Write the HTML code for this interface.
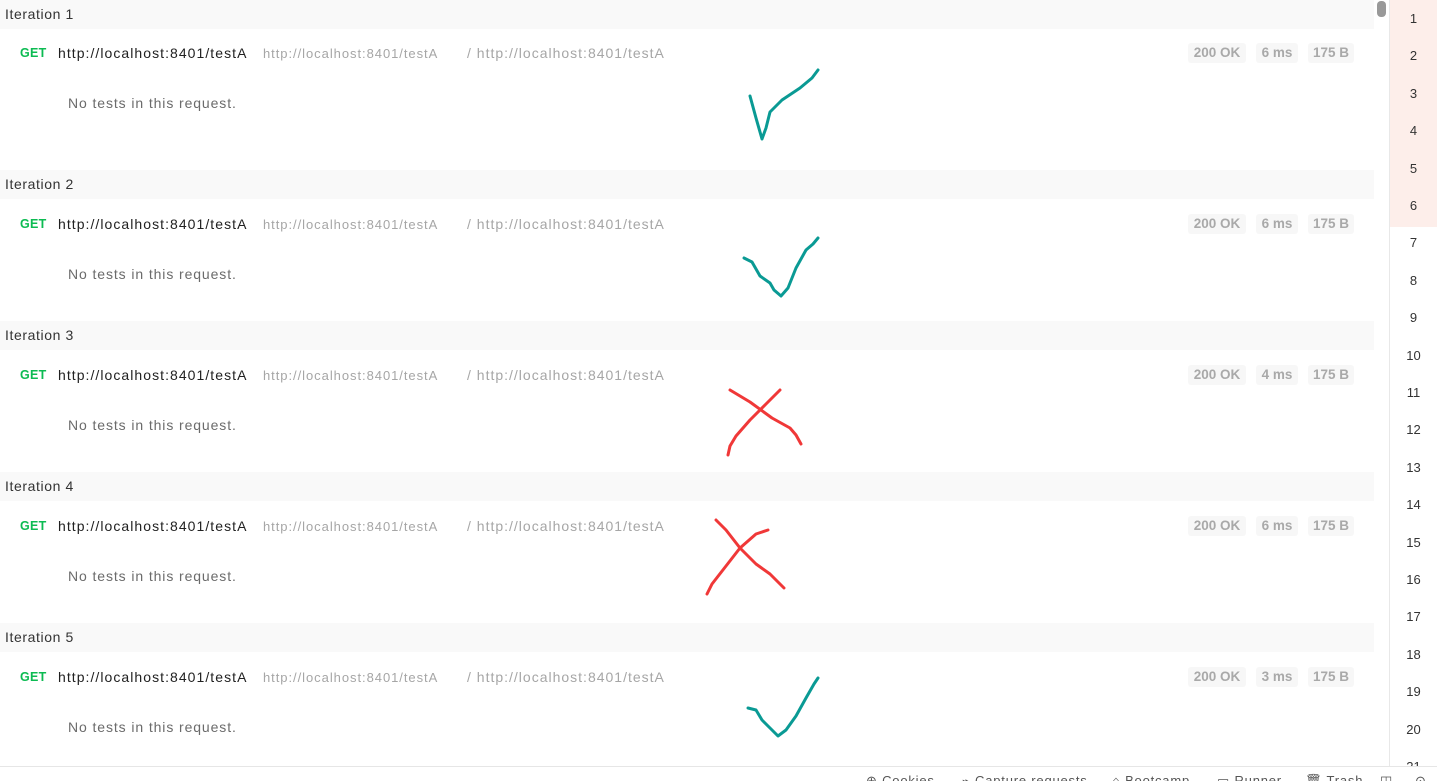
<!DOCTYPE html>
<html><head><style>
body{margin:0;width:1437px;height:780px;overflow:hidden;background:#fff;font-family:"Liberation Sans",sans-serif;position:relative}
.h{position:absolute;left:0;width:1374px;height:29px;background:#f9f9f9;font-size:14px;color:#333;line-height:29px;padding-left:5px;box-sizing:border-box;letter-spacing:0.6px}
.t{position:absolute;font-size:14px;white-space:nowrap}
.get{color:#0cbb52;font-weight:bold;font-size:12.5px;letter-spacing:0.3px}
.u{color:#212121;letter-spacing:1.05px}
.g{color:#a6a6a6;font-size:13px;letter-spacing:0.95px}
.g2{color:#a6a6a6;font-size:14px;letter-spacing:1px}
.nt{color:#6b6b6b;letter-spacing:0.9px}
.b{position:absolute;height:20px;line-height:20px;background:#f7f7f7;border-radius:3px;color:#a9a9a9;font-weight:bold;font-size:13.5px;text-align:center}
.ln{position:absolute;left:1390px;width:47px;text-align:center;font-size:13px;color:#333}
</style></head><body>
<div style="position:absolute;left:1390px;top:0;width:47px;height:227px;background:#fdeeea"></div>
<div style="position:absolute;left:1389px;top:0;width:1px;height:767px;background:#e8e8e8"></div>
<div style="position:absolute;left:1377px;top:1px;width:9px;height:16px;border-radius:4px;background:#999"></div>

<div id="rows"></div>
<script>
var tops=[0,170,321,472,623],ms=[6,6,4,6,3],s='';
tops.forEach(function(t,i){
s+='<div class="h" style="top:'+t+'px">Iteration '+(i+1)+'</div>';
var y=t+54-(i==0?0:-1);
s+='<div class="t get" style="left:20px;top:'+(y-8)+'px">GET</div>';
s+='<div class="t u" style="left:58px;top:'+(y-9)+'px">http://localhost:8401/testA</div>';
s+='<div class="t g" style="left:263px;top:'+(y-8)+'px">http://localhost:8401/testA</div>';
s+='<div class="t g2" style="left:467px;top:'+(y-9)+'px">/ http://localhost:8401/testA</div>';
s+='<div class="b" style="left:1188px;width:58px;top:'+(y-11)+'px">200 OK</div>';
s+='<div class="b" style="left:1256px;width:42px;top:'+(y-11)+'px">'+ms[i]+' ms</div>';
s+='<div class="b" style="left:1308px;width:46px;top:'+(y-11)+'px">175 B</div>';
s+='<div class="t nt" style="left:68px;top:'+(y+41)+'px">No tests in this request.</div>';
});
for(var n=1;n<=21;n++){s+='<div class="ln" style="top:'+(11+(n-1)*37.4)+'px">'+n+'</div>';}
document.getElementById('rows').innerHTML=s;
</script>
<svg style="position:absolute;left:0;top:0" width="1437" height="780" fill="none" stroke-linecap="round" stroke-linejoin="round" stroke-width="3">
<path stroke="#0a9a94" d="M750 96 L756 118 L762 139 L766 128 L770 112 L782 100 L800 88 L812 78 L818 70"/>
<path stroke="#0a9a94" d="M744 258 L752 262 L760 276 L770 283 L774 290 L781 296 L788 288 L796 268 L806 250 L813 244 L818 238"/>
<path stroke="#f03838" d="M730 390 L750 402 L772 418 L790 428 L796 435 L801 444 M780 390 L766 404 L750 420 L736 436 L730 446 L728 455"/>
<path stroke="#f03838" d="M716 520 L726 530 L740 548 L756 564 L770 574 L784 588 M768 530 L756 534 L740 548 L726 566 L712 584 L707 594"/>
<path stroke="#0a9a94" d="M748 708 L756 710 L762 720 L772 730 L778 736 L786 730 L796 716 L806 698 L814 684 L818 678"/>
</svg>
<div style="position:absolute;left:0;top:766px;width:1437px;height:14px;background:#fff;border-top:1px solid #e6e6e6;font-size:13px;color:#555;white-space:nowrap;overflow:hidden;letter-spacing:0.8px">
<span style="position:absolute;left:866px;top:6px">⊕ Cookies</span>
<span style="position:absolute;left:962px;top:6px">⌁ Capture requests</span>
<span style="position:absolute;left:1112px;top:6px">⌂ Bootcamp</span>
<span style="position:absolute;left:1217px;top:6px">▭ Runner</span>
<span style="position:absolute;left:1305px;top:6px">🗑 Trash</span>
<span style="position:absolute;left:1380px;top:6px">◫</span>
<span style="position:absolute;left:1415px;top:6px">⊙</span>
</div>
</body></html>
